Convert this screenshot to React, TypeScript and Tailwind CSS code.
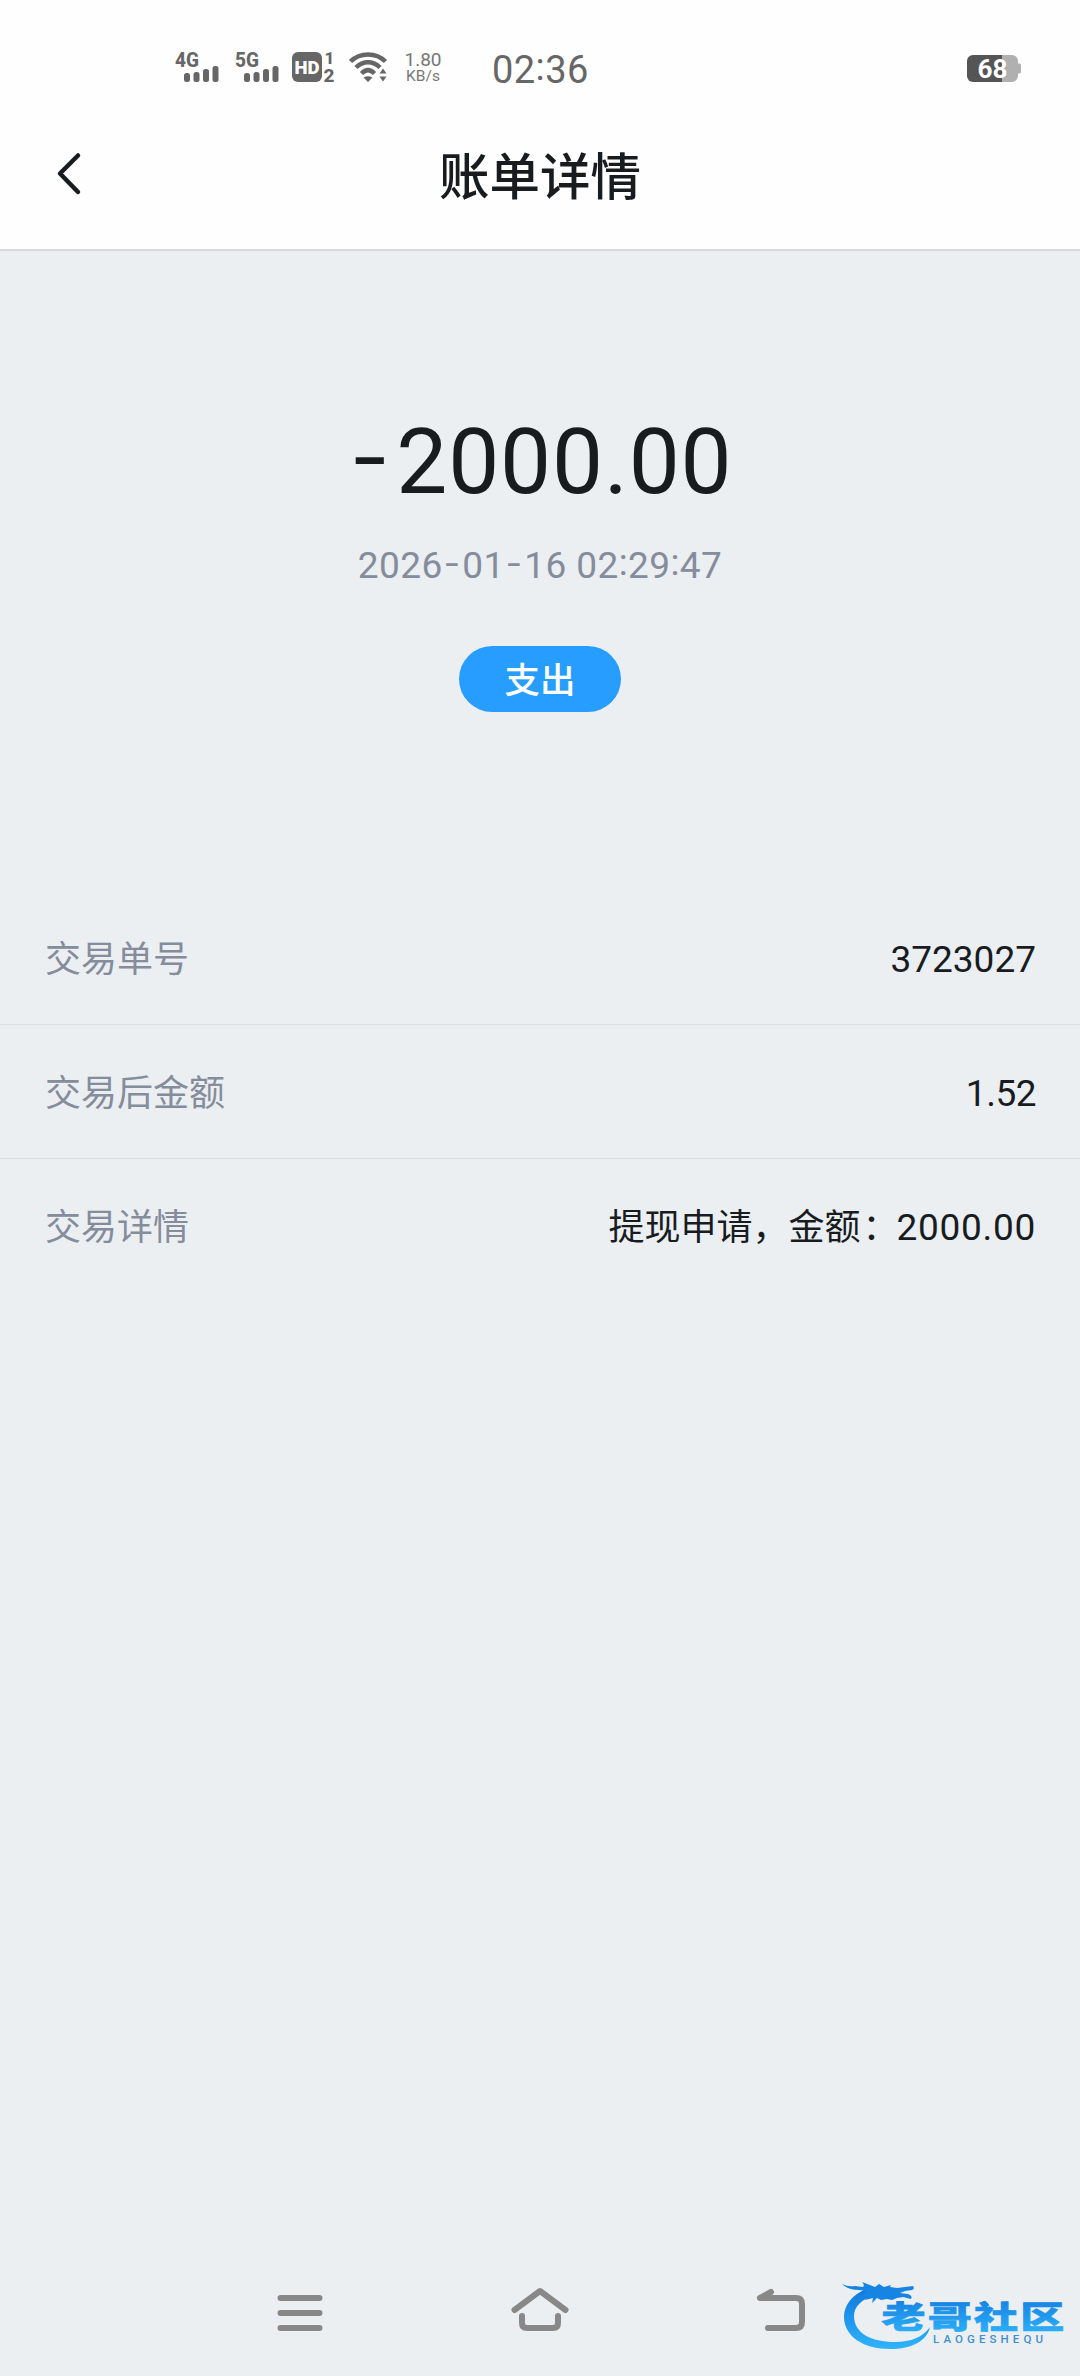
import React from 'react';

interface DetailRow {
  label: string;
  value: React.ReactNode;
}

// Dashes are stretched and dashes/colons raised to the middle of the digits
const Digits = ({ text }: { text: string }) => (
  <>
    {text.split('').map((char, i) => {
      if (char === '-') {
        return (
          <span key={i} className="inline-block w-[0.53em] text-center scale-x-[1.3] -translate-x-[0.02em] -translate-y-[0.06em]">
            -
          </span>
        );
      }
      if (char === ':') {
        return (
          <span key={i} className="inline-block -translate-y-[0.08em]">
            :
          </span>
        );
      }
      return char;
    })}
  </>
);

const rows: DetailRow[] = [
  { label: '交易单号', value: <span className="text-[37px]">3723027</span> },
  { label: '交易后金额', value: <span className="text-[37px] tracking-[-0.5px]">1.52</span> },
  {
    label: '交易详情',
    value: (
      <>
        <span className="text-[36px]">
          提现申请，金额<span className="inline-block translate-x-[2px]">：</span>
        </span>
        <span className="text-[37px] tracking-[0.7px]">2000.00</span>
      </>
    ),
  },
];

const Signal = ({ label }: { label: string }) => (
  <svg width="48" height="42" viewBox="0 -8 48 42" fill="#666">
    <text x="1" y="14.5" fontSize="19.5" fontWeight="800" textLength="24" lengthAdjust="spacingAndGlyphs">
      {label}
    </text>
    <rect x="10" y="21" width="6" height="9" rx="2.5" />
    <rect x="19.5" y="20" width="6" height="10" rx="2.5" />
    <rect x="29" y="17" width="6" height="13" rx="2.5" />
    <rect x="38.5" y="14" width="6" height="16" rx="2.5" />
  </svg>
);

const HdIcon = () => (
  <svg width="46" height="42" viewBox="0 -8 46 42" fill="#666">
    <rect x="0" y="0" width="30" height="30" rx="6" />
    <text x="2.5" y="21.5" fontSize="19" fontWeight="900" fill="#fefefe" textLength="25" lengthAdjust="spacingAndGlyphs">
      HD
    </text>
    <text x="32.5" y="12" fontSize="17" fontWeight="800">1</text>
    <text x="31.5" y="29.5" fontSize="18" fontWeight="800" textLength="11" lengthAdjust="spacingAndGlyphs">2</text>
  </svg>
);

const WifiIcon = () => (
  <svg width="40" height="32" viewBox="0 0 40 32" fill="none" stroke="#666" strokeWidth="4.5">
    <path d="M1.5 9.5C11 0 27 0 36.5 9.5" />
    <path d="M7 15.5C14 8.5 24 8.5 31 15.5" />
    <path d="M12.5 21.5C17 17 21 17 25.5 21.5" />
    <path d="M14.5 25.5q4.5-2.5 9 0l-4.5 4.5z" fill="#666" stroke="none" />
    <path d="M30.5 21.5l3.5-5 3.5 5zM30.5 24.5l3.5 5 3.5-5z" fill="#666" stroke="none" />
  </svg>
);

const BatteryIcon = () => (
  <svg width="56" height="28" viewBox="0 0 56 28">
    <path d="M35 0h10a6 6 0 0 1 6 6v2.5h1.5q1.5 0 1.5 2v6q0 2-1.5 2H51V21a6 6 0 0 1-6 6H35z" fill="#b0b0b0" />
    <path d="M6 0h29v27H6a6 6 0 0 1-6-6V6a6 6 0 0 1 6-6z" fill="#555" />
    <text x="10.5" y="22.5" fontSize="25" fontWeight="700" fill="#fff" textLength="30" lengthAdjust="spacingAndGlyphs">
      68
    </text>
  </svg>
);

const StatusBar = () => (
  <div className="h-[104px] flex items-start pl-[174px] pr-[57px] pt-[44px]">
    <Signal label="4G" />
    <div className="ml-3">
      <Signal label="5G" />
    </div>
    <div className="ml-[10px]">
      <HdIcon />
    </div>
    <div className="ml-[11px] mt-2">
      <WifiIcon />
    </div>
    <div className="ml-[15px] mt-2 w-[38px] flex flex-col items-center text-[#777]">
      <span className="text-[19px] leading-[16px]">1.80</span>
      <span className="text-[15.5px] leading-[16px]">KB/s</span>
    </div>
    <span className="ml-[50px] mt-2 text-[38px] leading-[36px] text-[#666] tracking-[0.4px]">
      <Digits text="02:36" />
    </span>
    <div className="ml-auto mt-[11px]">
      <BatteryIcon />
    </div>
  </div>
);

const Watermark = () => (
  <svg width="245" height="90" viewBox="0 0 245 90">
    <defs>
      <linearGradient id="brand" x1="0" y1="0" x2="0" y2="1">
        <stop offset="0" stopColor="#0f78dc" />
        <stop offset="1" stopColor="#2fb4fb" />
      </linearGradient>
    </defs>
    <path
      d="M31 19C17 25 9 35 9 47C9 66 28 79 55 79C77 79 92 71 95 57C88 67 76 72 60 72C36 72 19 63 19 46C19 37 26 29 41 25Z"
      fill="url(#brand)"
    />
    <path
      d="M7 14Q13 17 20 16L28 17Q30 15 27 12L35 15L40 17L44 14L49 17L56 15L55 17L62 18Q70 17 78 16Q80 19 77 20L70 21L65 23L73 24Q78 26 76 29L68 27L62 28L57 30L52 29L46 30L42 28L37 33L38 28L30 30L34 26L24 28L31 21L24 20Q13 20 7 14Z"
      fill="#1684e2"
    />
    <g transform="translate(46.5 57.5) scale(1.42 1)">
      <text
        fontFamily="'Noto Sans CJK SC', sans-serif"
        fontSize="31"
        fontWeight="900"
        fill="url(#brand)"
        stroke="url(#brand)"
        strokeWidth="0.7"
        letterSpacing="1.6"
      >
        老哥社区
      </text>
    </g>
    <text x="98" y="73" fontSize="11.5" fontWeight="500" fill="#3f8fd0" textLength="110">
      LAOGESHEQU
    </text>
  </svg>
);

const App: React.FC = () => {
  return (
    <div className="w-[1080px] h-[2376px] flex flex-col bg-[#ebeff2] text-[#181c1f] font-[Roboto,'Noto_Sans_CJK_SC',sans-serif] overflow-hidden">
      <header className="h-[251px] shrink-0 bg-[#fefefe] border-b-2 border-[#d6dade]">
        <StatusBar />
        <div className="grid grid-cols-[140px_1fr_140px] items-center h-[144px]">
          <svg className="ml-[56px] -mt-1" width="28" height="44" viewBox="0 0 28 44" fill="none" stroke="#181c1f" strokeWidth="4.5" strokeLinecap="round" strokeLinejoin="round">
            <path d="M22 3.5L4 21.5L22 40" />
          </svg>
          <h1 className="pt-1 text-center text-[50.5px] font-medium leading-[60px]">账单详情</h1>
        </div>
      </header>

      <section className="h-[640px] shrink-0 flex flex-col items-center pt-[158px]">
        <div className="text-[90px] leading-[108px] tracking-[0.8px] scale-x-[1.01]">
          <Digits text="-2000.00" />
        </div>
        <p className="mt-[26px] text-[37px] leading-[46px] text-[#858c9b] tracking-[0.4px]">
          <Digits text="2026-01-16 02:29:47" />
        </p>
        <span className="mt-[57px] pt-[5px] w-[162px] h-[66px] rounded-full bg-[#279eff] text-white text-[35.5px] font-medium flex items-center justify-center">
          支出
        </span>
      </section>

      <ul className="grow">
        {rows.map((row) => (
          <li
            key={row.label}
            className="h-[134px] pt-1 pl-[45px] pr-[44px] flex items-center justify-between border-b border-[#dadee2] last:border-b-0"
          >
            <span className="text-[36px] text-[#858c9b]">{row.label}</span>
            <span className="flex items-center">{row.value}</span>
          </li>
        ))}
      </ul>

      <nav className="h-[110px] shrink-0 flex items-start pl-[277px]">
        <svg className="mt-[28px]" width="46" height="38" viewBox="0 0 46 38" stroke="#888" strokeWidth="6" strokeLinecap="round">
          <path d="M3.5 4H42.5M3.5 19H42.5M3.5 34H42.5" />
        </svg>
        <svg className="ml-[188px] mt-[20px]" width="58" height="46" viewBox="0 0 58 46" fill="none" stroke="#888" strokeWidth="6" strokeLinecap="round" strokeLinejoin="round">
          <path d="M3.5 24L29 5L54.5 24" />
          <path d="M11 30V37Q11 42 16 42H42Q47 42 47 37V30" />
        </svg>
        <svg className="ml-[187px] mt-[20px]" width="50" height="46" viewBox="0 0 50 46" fill="none" stroke="#888" strokeWidth="6" strokeLinecap="round" strokeLinejoin="round">
          <path d="M15 6L4 12H40Q46 12 46 18V36Q46 42 40 42H12" />
        </svg>
        <div className="ml-[29px] mt-1">
          <Watermark />
        </div>
      </nav>
    </div>
  );
};

export default App;
